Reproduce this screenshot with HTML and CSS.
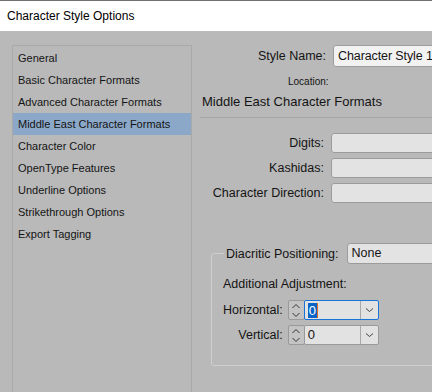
FILE: index.html
```html
<!DOCTYPE html>
<html>
<head>
<meta charset="utf-8">
<link rel="stylesheet" href="styles.css">
</head>
<body>
<div class="window">
  <div class="titlebar">Character Style Options</div>
  <div class="main">
    <div class="sidebar">
      <div class="item">General</div>
      <div class="item">Basic Character Formats</div>
      <div class="item">Advanced Character Formats</div>
      <div class="item selected">Middle East Character Formats</div>
      <div class="item">Character Color</div>
      <div class="item">OpenType Features</div>
      <div class="item">Underline Options</div>
      <div class="item">Strikethrough Options</div>
      <div class="item">Export Tagging</div>
    </div>
    <div class="content">
      <div class="name-row">
        <span class="label">Style Name:</span>
        <div class="textbox light">Character Style 1</div>
      </div>
      <div class="location">Location:</div>
      <div class="heading">Middle East Character Formats</div>
      <div class="separator"></div>
      <div class="form">
        <span class="label">Digits:</span><div class="textbox"></div>
        <span class="label">Kashidas:</span><div class="textbox"></div>
        <span class="label">Character Direction:</span><div class="textbox"></div>
      </div>
      <fieldset class="group">
        <legend class="legend">
          <span class="label">Diacritic Positioning:</span>
          <div class="textbox select">None</div>
        </legend>
        <div class="sub-heading">Additional Adjustment:</div>
        <div class="adjust">
          <span class="label">Horizontal:</span>
          <div class="spinner">
            <svg width="10" height="15" viewBox="0 0 10 15"><path d="M1.5 5 L5 1.5 L8.5 5 M1.5 10 L5 13.5 L8.5 10" fill="none" stroke="#333" stroke-width="1"/></svg>
          </div>
          <div class="combo focused">
            <span class="value"><span class="sel">0</span><span class="caret"></span></span>
            <span class="drop"><svg width="9" height="6" viewBox="0 0 9 6"><path d="M1 1.5 L4.5 4.5 L8 1.5" fill="none" stroke="#444" stroke-width="1"/></svg></span>
          </div>
          <span class="label">Vertical:</span>
          <div class="spinner">
            <svg width="10" height="15" viewBox="0 0 10 15"><path d="M1.5 5 L5 1.5 L8.5 5 M1.5 10 L5 13.5 L8.5 10" fill="none" stroke="#333" stroke-width="1"/></svg>
          </div>
          <div class="combo">
            <span class="value">0</span>
            <span class="drop"><svg width="9" height="6" viewBox="0 0 9 6"><path d="M1 1.5 L4.5 4.5 L8 1.5" fill="none" stroke="#444" stroke-width="1"/></svg></span>
          </div>
        </div>
      </fieldset>
    </div>
  </div>
</div>
</body>
</html>
```

FILE: styles.css
```css
html, body {
  margin: 0;
  padding: 0;
  width: 432px;
  height: 392px;
  overflow: hidden;
}
body {
  background: #b9b9b9;
  font-family: "Liberation Sans", Arial, sans-serif;
  color: #141414;
}
.window {
  width: 432px;
  height: 392px;
  overflow: hidden;
}
.titlebar {
  height: 30px;
  border-top: 1px solid #707070;
  background: #ffffff;
  padding-left: 7px;
  font-size: 12px;
  line-height: 30px;
  color: #000;
}
.main {
  display: flex;
  gap: 8px;
  padding: 14px 0 0 12px;
}
.sidebar {
  flex: none;
  width: 178px;
  height: 360px;
  border: 1px solid #a9a9a9;
  border-bottom: none;
  padding-top: 1px;
  box-sizing: content-box;
}
.item {
  height: 22px;
  line-height: 22px;
  padding-left: 5px;
  font-size: 11px;
  white-space: nowrap;
}
.item.selected {
  background: #8ca8c9;
}
.content {
  flex: none;
  width: 232px;
}
.label {
  font-size: 12.5px;
  white-space: nowrap;
  text-align: right;
}
.textbox {
  height: 18px;
  border: 1px solid #9c9c9c;
  border-radius: 3px;
  background: #e3e3e3;
  box-sizing: content-box;
  font-size: 12.5px;
  line-height: 18px;
  padding-left: 4px;
  white-space: nowrap;
}
.textbox.light {
  height: 20px;
  line-height: 20px;
  background: #f2f2f2;
  padding-left: 4px;
  font-size: 12.5px;
  letter-spacing: -0.1px;
}
.name-row {
  display: grid;
  grid-template-columns: 126px 130px;
  column-gap: 7px;
  align-items: center;
}
.location {
  margin-top: 8px;
  padding-left: 88px;
  font-size: 10px;
  line-height: 14px;
}
.heading {
  margin-top: 4px;
  padding-left: 2px;
  font-size: 13px;
  line-height: 18px;
}
.separator {
  margin-top: 6px;
  height: 1px;
  background: #a6a6a6;
}
.form {
  margin-top: 15px;
  display: grid;
  grid-template-columns: 124px 130px;
  column-gap: 7px;
  row-gap: 5px;
  align-items: center;
}
.group {
  margin: 40px 0 0 11px;
  width: 260px;
  height: 123px;
  padding: 0 0 0 12px;
  border: 1px solid #cfcfcf;
  border-radius: 3px;
  box-sizing: border-box;
}
.legend {
  display: flex;
  align-items: center;
  gap: 8px;
  padding: 0 4px 0 2px;
}
.select {
  width: 100px;
  height: 19px;
  line-height: 19px;
}
.sub-heading {
  font-size: 12.5px;
  line-height: 18px;
  margin-top: 11px;
  margin-left: -1px;
}
.adjust {
  margin-top: 7px;
  margin-left: -1px;
  display: grid;
  grid-template-columns: auto 16px 75px;
  justify-content: start;
  column-gap: 0;
  row-gap: 5px;
  align-items: center;
}
.adjust .label {
  padding-right: 5px;
}
.spinner {
  height: 18px;
  border: 1px solid #9a9a9a;
  border-radius: 2px;
  background: #c4c4c4;
  display: flex;
  align-items: center;
  justify-content: center;
  margin-right: -1px;
}
.spinner svg {
  display: block;
}
.combo {
  height: 18px;
  border: 1px solid #9a9a9a;
  border-radius: 2px;
  background: #e2e2e2;
  display: flex;
  font-size: 13px;
  line-height: 18px;
}
.combo.focused {
  border-color: #1a73d6;
}
.combo .value {
  flex: 1;
  padding-left: 3px;
  display: flex;
  align-items: center;
}
.combo .sel {
  background: #0a64c8;
  color: #fff;
  line-height: 15px;
  padding: 0 1px;
}
.combo .caret {
  width: 1px;
  height: 15px;
  background: #e07020;
}
.combo .drop {
  width: 17px;
  border-left: 1px solid #a8a8a8;
  display: flex;
  align-items: center;
  justify-content: center;
}
```
